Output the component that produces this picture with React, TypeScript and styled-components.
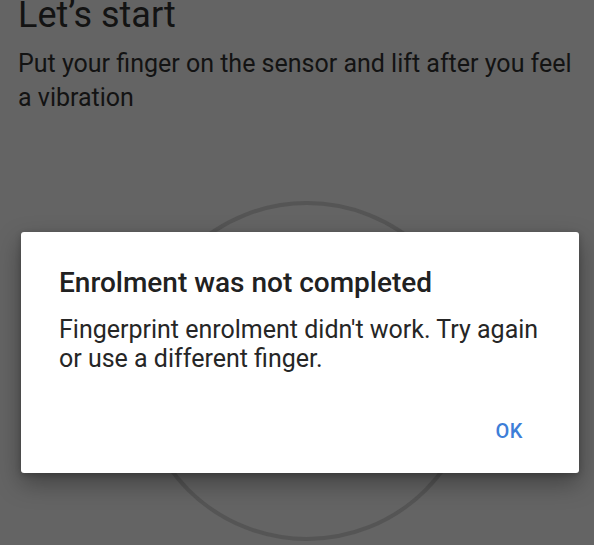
import React from "react";
import styled, { createGlobalStyle } from "styled-components";

const Global = createGlobalStyle`
  html, body {
    margin: 0;
    padding: 0;
    background: #646464;
    width: 594px;
    height: 545px;
    overflow: hidden;
  }
  body {
    font-family: Roboto, "Noto Sans", Arial, sans-serif;
  }
`;

const Screen = styled.div`
  position: relative;
  width: 594px;
  height: 545px;
  overflow: hidden;
  background: #646464;
`;

const Content = styled.div`
  display: flex;
  flex-direction: column;
  padding: 0 10px 0 18px;
`;

const Title = styled.h1`
  margin: -6px 0 0;
  font-size: 36px;
  line-height: 42px;
  font-weight: 400;
  color: #131313;
`;

const Subtitle = styled.p`
  margin: 11px 0 0;
  font-size: 25px;
  line-height: 34px;
  font-weight: 400;
  color: #131313;
`;

const Illustration = styled.div`
  display: flex;
  justify-content: center;
  margin-top: 86px;
  padding-left: 12px;
`;

const SensorRing = styled.div`
  width: 332px;
  height: 332px;
  border-radius: 50%;
  border: 4px solid #555555;
`;

const Dialog = styled.div`
  position: absolute;
  left: 21px;
  top: 232px;
  width: 558px;
  height: 241px;
  box-sizing: border-box;
  background: #ffffff;
  border-radius: 3px;
  box-shadow: 0 10px 24px rgba(0, 0, 0, 0.35), 0 2px 6px rgba(0, 0, 0, 0.2);
  padding: 34px 28px 0 38px;
  display: flex;
  flex-direction: column;
`;

const DialogTitle = styled.h2`
  margin: 0;
  font-size: 28px;
  line-height: 33px;
  font-weight: 500;
  color: #212121;
`;

const DialogBody = styled.p`
  margin: 16px 0 0;
  font-size: 25px;
  line-height: 29px;
  font-weight: 400;
  color: #262626;
`;

const Actions = styled.div`
  display: flex;
  justify-content: flex-end;
  margin-top: 46px;
  padding-right: 28px;
`;

const TextButton = styled.button`
  border: none;
  background: none;
  padding: 0;
  font-family: Roboto, "Noto Sans", Arial, sans-serif;
  font-size: 20px;
  line-height: 24px;
  font-weight: 500;
  letter-spacing: 0.6px;
  color: #3d7ed8;
  cursor: pointer;
`;

export default function App() {
  return (
    <Screen>
      <Global />
      <Content>
        <Title>Let’s start</Title>
        <Subtitle>
          Put your finger on the sensor and lift after you feel a vibration
        </Subtitle>
        <Illustration>
          <SensorRing />
        </Illustration>
      </Content>
      <Dialog role="dialog">
        <DialogTitle>Enrolment was not completed</DialogTitle>
        <DialogBody>
          Fingerprint enrolment didn't work. Try again or use a different finger.
        </DialogBody>
        <Actions>
          <TextButton>OK</TextButton>
        </Actions>
      </Dialog>
    </Screen>
  );
}
